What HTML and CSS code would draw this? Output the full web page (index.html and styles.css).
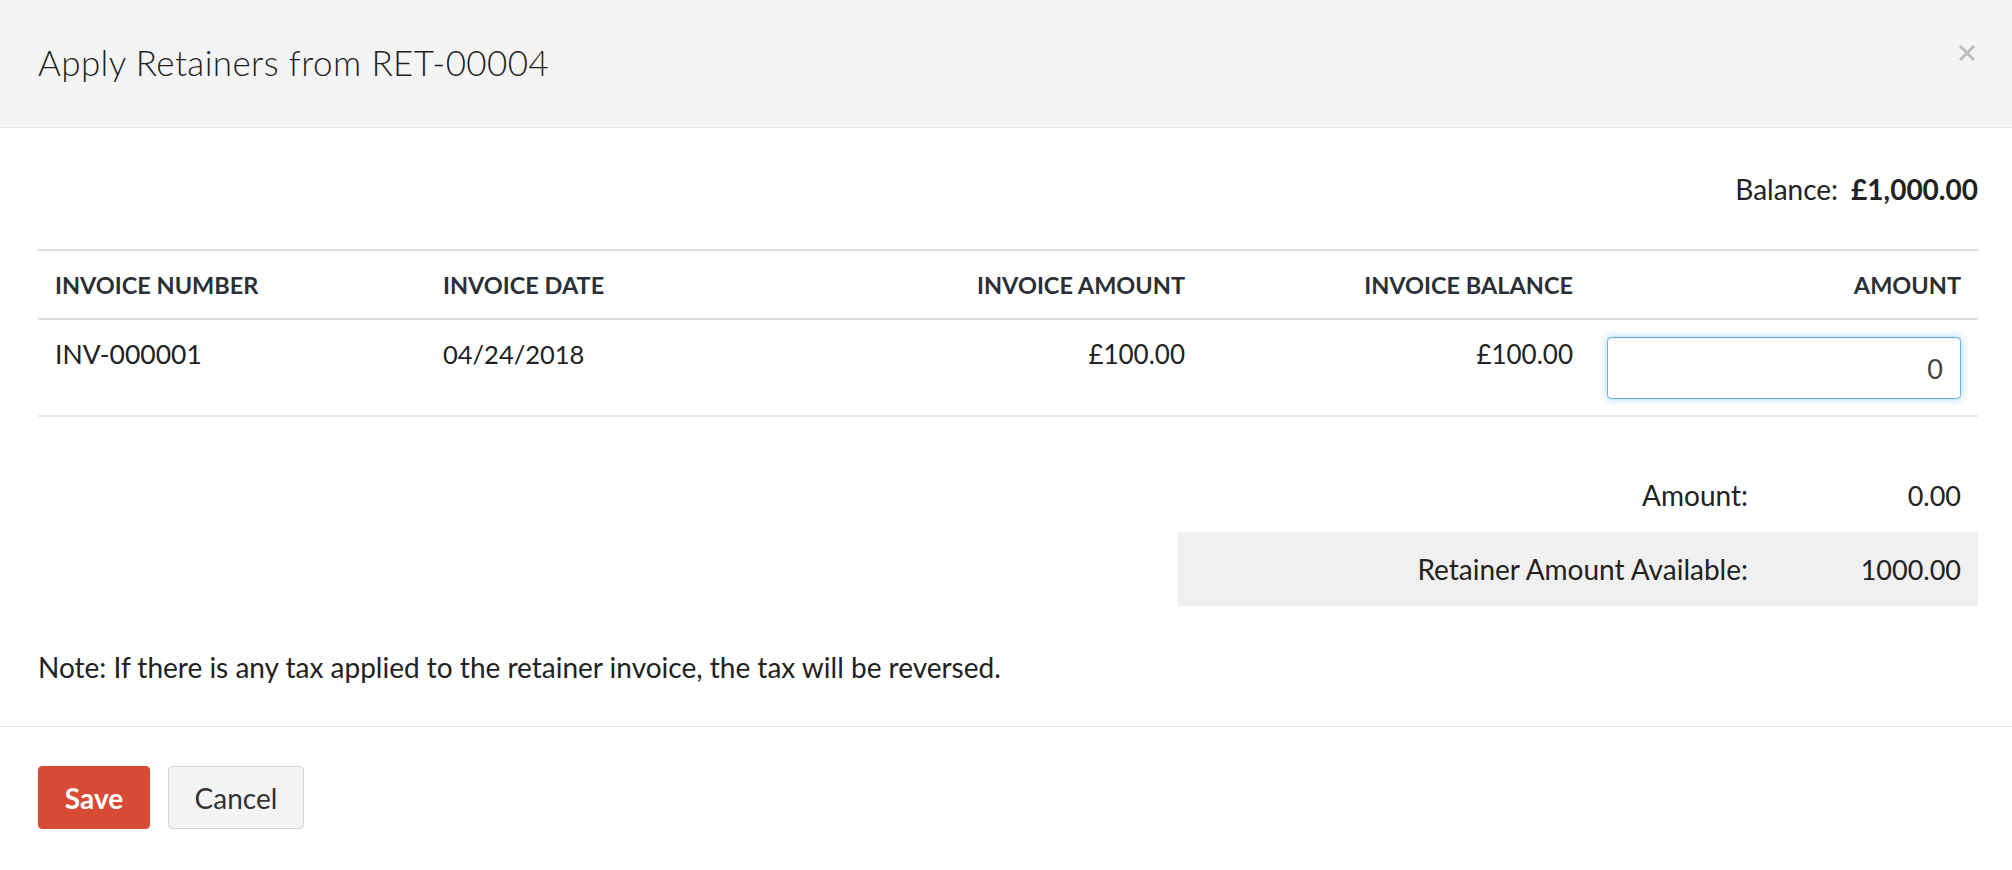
FILE: index.html
```html
<!DOCTYPE html>
<html lang="en">
<head>
<meta charset="utf-8">
<title>Apply Retainers</title>
<link rel="stylesheet" href="styles.css">
</head>
<body>
<div class="modal">
  <div class="modal-header">
    <h1 class="modal-title">Apply Retainers from RET-00004</h1>
    <button class="close" aria-label="Close">
      <svg width="18" height="16" viewBox="0 0 18 16"><path d="M2 1 L16 15 M16 1 L2 15" stroke="#bdbdbd" stroke-width="3" fill="none"/></svg>
    </button>
  </div>
  <div class="modal-body">
    <div class="balance"><span class="balance-label">Balance:</span><span class="balance-value">£1,000.00</span></div>
    <table class="inv-table">
      <thead>
        <tr>
          <th>INVOICE NUMBER</th>
          <th>INVOICE DATE</th>
          <th class="r">INVOICE AMOUNT</th>
          <th class="r">INVOICE BALANCE</th>
          <th class="r">AMOUNT</th>
        </tr>
      </thead>
      <tbody>
        <tr>
          <td class="txt">INV-000001</td>
          <td class="date">04/24/2018</td>
          <td class="r">£100.00</td>
          <td class="r">£100.00</td>
          <td class="r"><input class="amount-input" type="text" value="0"></td>
        </tr>
      </tbody>
    </table>
    <div class="summary">
      <div class="sum-row">
        <div class="sum-label">Amount:</div>
        <div class="sum-value">0.00</div>
      </div>
      <div class="sum-row shaded">
        <div class="sum-label">Retainer Amount Available:</div>
        <div class="sum-value">1000.00</div>
      </div>
    </div>
    <p class="note">Note: If there is any tax applied to the retainer invoice, the tax will be reversed.</p>
  </div>
  <div class="modal-footer">
    <button class="btn btn-save">Save</button>
    <button class="btn btn-cancel">Cancel</button>
  </div>
</div>
</body>
</html>
```

FILE: styles.css
```css
* { box-sizing: border-box; }
html, body { margin: 0; padding: 0; background: #fff; }
body {
  font-family: "Lato", "Liberation Sans", sans-serif;
  color: #222;
  font-size: 28px;
}
.modal { width: 2012px; height: 870px; background: #fff; }

.modal-header {
  height: 128px;
  background: #f4f4f4;
  border-bottom: 1px solid #e6e6e6;
  display: flex;
  justify-content: space-between;
  align-items: center;
  padding: 0 36px 4px 38px;
}
.modal-title {
  margin: 0;
  font-size: 35px;
  font-weight: 300;
  letter-spacing: 0.4px;
  line-height: 40px;
  color: #1f1f1f;
}
.close {
  border: 0;
  background: none;
  padding: 0;
  width: 18px;
  height: 16px;
  align-self: flex-start;
  margin-top: 45px;
  display: flex;
}

.modal-body { padding: 43px 34px 41px 38px; }
.balance {
  display: flex;
  justify-content: flex-end;
  gap: 13px;
  line-height: 36px;
  font-size: 28px;
}
.balance-value { font-weight: 700; }

.inv-table {
  width: 100%;
  margin-top: 42px;
  border-collapse: collapse;
  table-layout: fixed;
  border-top: 2px solid #dddddd;
}
.inv-table th {
  font-size: 23.5px;
  font-weight: 700;
  color: #2b3036;
  text-align: left;
  line-height: 30px;
  padding: 19px 17px 18px;
  border-bottom: 2px solid #dddddd;
}
.inv-table td {
  vertical-align: top;
  padding: 17px 17px 16px;
  font-size: 26px;
  line-height: 34px;
  border-bottom: 2px solid #e6e6e6;
}
.inv-table td.txt { font-size: 26.5px; }
.inv-table td.date { font-size: 25.5px; }
.inv-table .r { text-align: right; }
.amount-input {
  width: 100%;
  height: 62px;
  display: block;
  border: 1px solid #66afe9;
  border-radius: 4px;
  box-shadow: inset 0 1px 1px rgba(0,0,0,.075), 0 0 8px rgba(102,175,233,.55);
  font-family: inherit;
  font-size: 27px;
  color: #444;
  text-align: right;
  padding: 0 17px;
  outline: none;
}

.summary {
  width: 800px;
  margin: 41px 0 0 auto;
}
.sum-row {
  display: grid;
  grid-template-columns: 1fr 213px;
  height: 74px;
  align-items: center;
}
.sum-row.shaded { background: #f0f0f0; }
.sum-label { text-align: right; padding-right: 17px; font-size: 28px; }
.sum-value { text-align: right; padding-right: 17px; font-size: 27px; }

.note {
  margin: 43px 0 0;
  line-height: 36px;
  font-size: 28px;
}

.modal-footer {
  border-top: 1px solid #e6e6e6;
  padding: 39px 38px;
  display: flex;
  gap: 18px;
}
.btn {
  height: 63px;
  font-family: inherit;
  font-size: 28px;
  border-radius: 4px;
  cursor: pointer;
  padding: 0;
}
.btn-save {
  width: 112px;
  background: #d74a33;
  border: 1px solid #d74a33;
  color: #fff;
  font-weight: 700;
}
.btn-cancel {
  width: 136px;
  background: #f4f4f4;
  border: 1px solid #d6d6d6;
  color: #333;
}
```
